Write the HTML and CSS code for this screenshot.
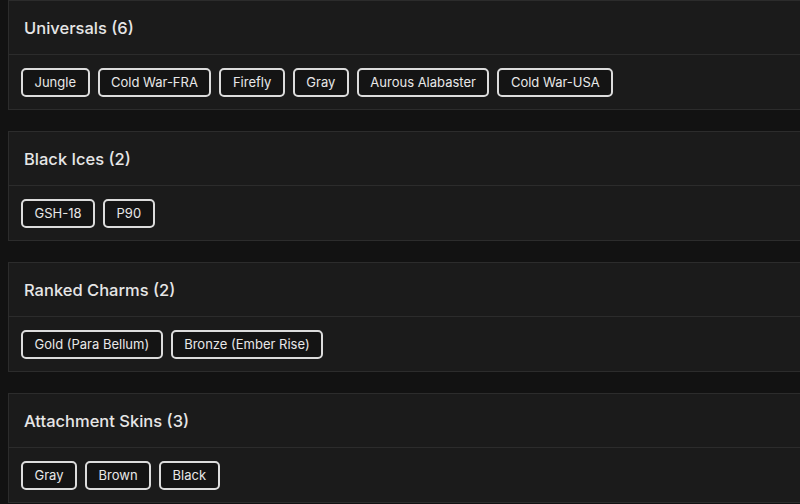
FILE: index.html
```html
<!DOCTYPE html>
<html>
<head>
<meta charset="utf-8">
<link rel="stylesheet" href="styles.css">
</head>
<body>
<div class="list">
  <section class="card">
    <div class="card-head">Universals (6)</div>
    <div class="card-body">
      <span class="chip">Jungle</span>
      <span class="chip">Cold War-FRA</span>
      <span class="chip">Firefly</span>
      <span class="chip">Gray</span>
      <span class="chip">Aurous Alabaster</span>
      <span class="chip">Cold War-USA</span>
    </div>
  </section>
  <section class="card">
    <div class="card-head">Black Ices (2)</div>
    <div class="card-body">
      <span class="chip">GSH-18</span>
      <span class="chip">P90</span>
    </div>
  </section>
  <section class="card">
    <div class="card-head">Ranked Charms (2)</div>
    <div class="card-body">
      <span class="chip">Gold (Para Bellum)</span>
      <span class="chip">Bronze (Ember Rise)</span>
    </div>
  </section>
  <section class="card">
    <div class="card-head">Attachment Skins (3)</div>
    <div class="card-body">
      <span class="chip">Gray</span>
      <span class="chip">Brown</span>
      <span class="chip">Black</span>
    </div>
  </section>
</div>
</body>
</html>
```
FILE: styles.css
```css
html, body {
  margin: 0;
  background: #121212;
  overflow: hidden;
}
body {
  font-family: Inter, "Noto Sans", sans-serif;
  color: #e6e6e6;
}
.list {
  display: flex;
  flex-direction: column;
  gap: 21px;
  padding: 0 0 0 8px;
}
.card {
  background: #1b1b1b;
  border: 1px solid #2c2c2c;
  border-right: none;
}
.card-head {
  height: 53px;
  display: flex;
  align-items: center;
  padding-left: 15px;
  font-size: 16.5px;
  font-weight: 500;
  border-bottom: 1px solid #2c2c2c;
}
.card-body {
  height: 54px;
  display: flex;
  align-items: center;
  gap: 8px;
  padding-left: 12px;
}
.chip {
  height: 25px;
  display: inline-flex;
  align-items: center;
  padding: 0 11.5px;
  font-size: 13px;
  color: #e8e8e8;
  background: #141414;
  border: 2px solid #dcdcdc;
  border-radius: 5px;
}
```
